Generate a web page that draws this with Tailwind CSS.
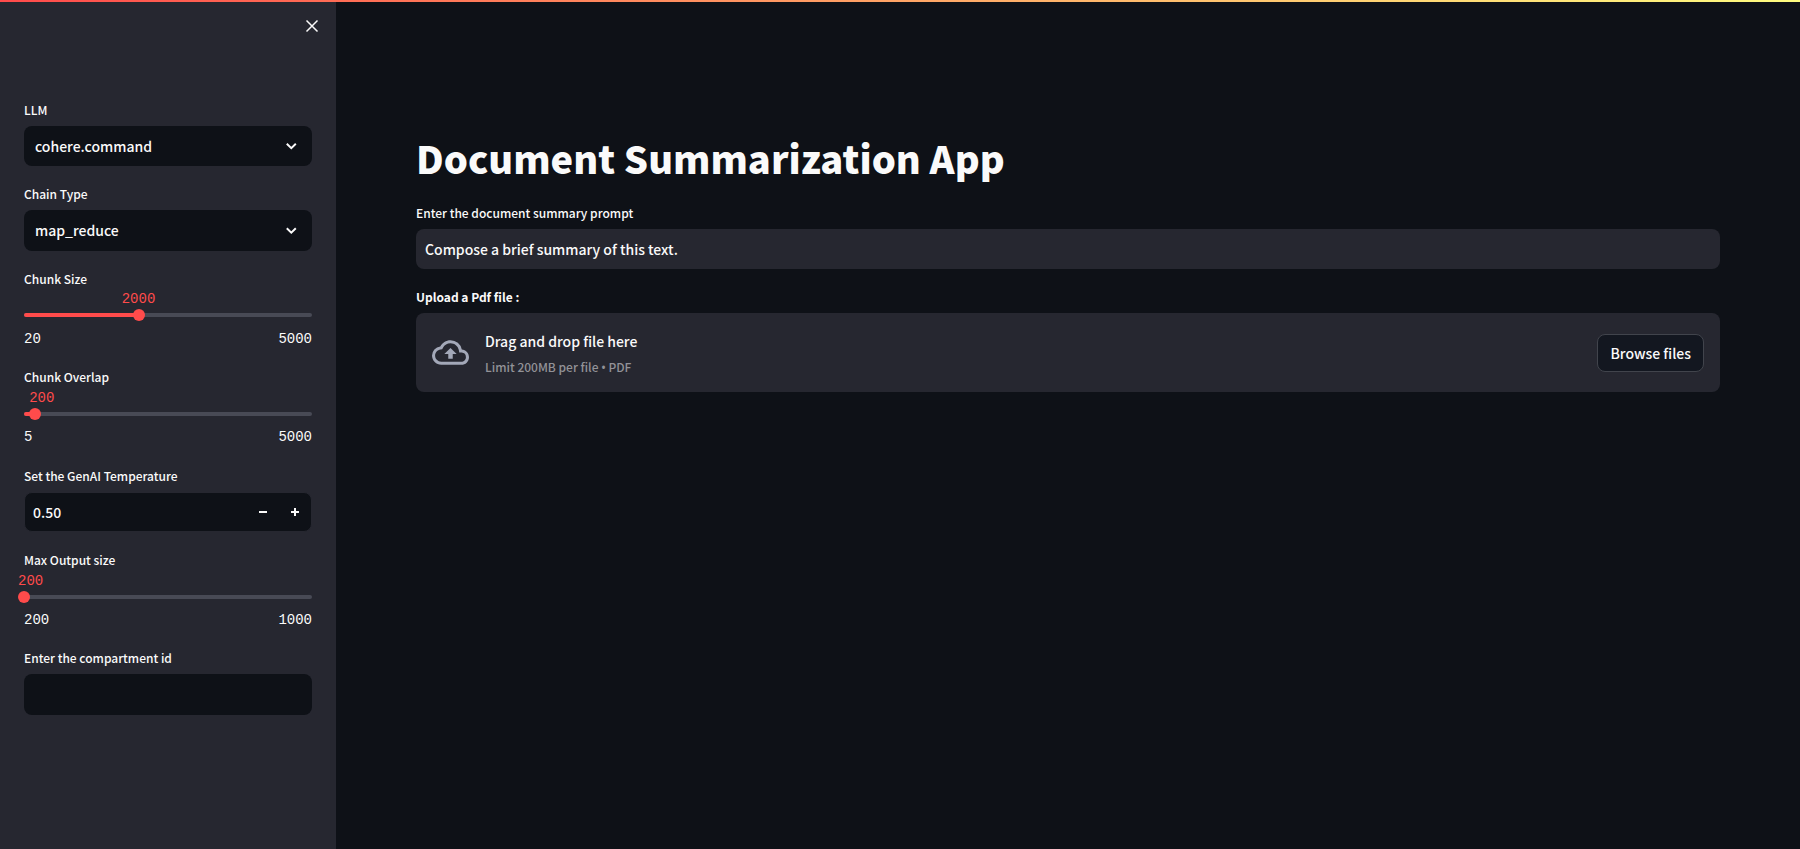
<!DOCTYPE html>
<html lang="en">
<head>
<meta charset="utf-8">
<meta name="viewport" content="width=device-width, initial-scale=1">
<title>Document Summarization App</title>
<script src="https://cdn.jsdelivr.net/npm/@tailwindcss/browser@4"></script>
</head>
<body class="relative flex min-h-screen bg-[#0e1117] font-['Noto_Sans_CJK_SC','Noto_Sans',sans-serif] text-sm font-medium text-[#fafafa]">
  <div class="absolute inset-x-0 top-0 h-0.5 bg-linear-to-r/srgb from-[#ff4b4b] to-[#fffd80]"></div>

  <aside class="w-84 shrink-0 bg-[#262730] px-6">
    <div class="-mr-3 flex h-[98px] justify-end pt-3.5">
      <button type="button" aria-label="Close sidebar" class="flex size-6 items-center justify-center">
        <svg class="size-6" viewBox="0 0 24 24" fill="none" stroke="currentColor" stroke-width="1.5"><path d="M6.5 6.5l11 11M17.5 6.5l-11 11"/></svg>
      </button>
    </div>

    <form class="flex flex-col gap-4">
      <div class="flex flex-col gap-1">
        <label for="llm" class="text-xs leading-6">LLM</label>
        <div class="relative">
          <select id="llm" class="h-10 w-full appearance-none rounded-lg bg-[#0e1117] pr-10 pl-[11px]"><option>cohere.command</option></select>
          <svg class="pointer-events-none absolute top-3 right-3 size-4" viewBox="0 0 16 16" fill="none" stroke="currentColor" stroke-width="2"><path d="M2.8 5.8L7.3 10.2L11.8 5.8"/></svg>
        </div>
      </div>

      <div class="flex flex-col gap-1">
        <label for="chain" class="text-xs leading-6">Chain Type</label>
        <div class="relative">
          <select id="chain" class="h-[41px] w-full appearance-none rounded-lg bg-[#0e1117] pr-10 pb-px pl-[11px]"><option>map_reduce</option></select>
          <svg class="pointer-events-none absolute top-3 right-3 size-4" viewBox="0 0 16 16" fill="none" stroke="currentColor" stroke-width="2"><path d="M2.8 6.3L7.3 10.7L11.8 6.3"/></svg>
        </div>
      </div>

      <div class="flex h-[82px] flex-col">
        <label for="chunk-size" class="text-xs leading-6">Chunk Size</label>
        <div class="relative h-[18px] font-['Liberation_Mono',monospace] leading-4 font-normal text-[#ff4b4b]">
          <output for="chunk-size" class="absolute -translate-x-1/2" style="left:39.76%">2000</output>
        </div>
        <div class="relative flex h-3 items-center">
          <div class="h-1 w-full overflow-hidden rounded-full bg-[#484a55]"><div class="h-1 bg-[#ff4b4b]" style="width:39.76%"></div></div>
          <input id="chunk-size" type="range" min="20" max="5000" value="2000" class="absolute -inset-x-1.5 h-3 appearance-none bg-transparent [&::-webkit-slider-thumb]:size-3 [&::-webkit-slider-thumb]:appearance-none [&::-webkit-slider-thumb]:rounded-full [&::-webkit-slider-thumb]:bg-[#ff4b4b]">
        </div>
        <div class="flex justify-between pt-2 font-['Liberation_Mono',monospace] leading-5 font-normal"><span>20</span><span>5000</span></div>
      </div>

      <div class="flex h-[83px] flex-col">
        <label for="chunk-overlap" class="text-xs leading-6">Chunk Overlap</label>
        <div class="relative h-[19px] font-['Liberation_Mono',monospace] leading-[18px] font-normal text-[#ff4b4b]">
          <output for="chunk-overlap" class="absolute -translate-x-1.5" style="left:3.9%">200</output>
        </div>
        <div class="relative flex h-3 items-center">
          <div class="h-1 w-full overflow-hidden rounded-full bg-[#484a55]"><div class="h-1 bg-[#ff4b4b]" style="width:3.9%"></div></div>
          <input id="chunk-overlap" type="range" min="5" max="5000" value="200" class="absolute -inset-x-1.5 h-3 appearance-none bg-transparent [&::-webkit-slider-thumb]:size-3 [&::-webkit-slider-thumb]:appearance-none [&::-webkit-slider-thumb]:rounded-full [&::-webkit-slider-thumb]:bg-[#ff4b4b]">
        </div>
        <div class="flex justify-between pt-[7px] font-['Liberation_Mono',monospace] leading-5 font-normal"><span>5</span><span>5000</span></div>
      </div>

      <div class="flex flex-col gap-1">
        <label for="temperature" class="text-xs leading-6">Set the GenAI Temperature</label>
        <div class="flex h-10 overflow-hidden rounded-lg border border-[#262730] bg-[#0e1117]">
          <input id="temperature" type="number" min="0" max="1" step="0.01" value="0.50" class="min-w-0 flex-1 appearance-none pl-2 [appearance:textfield]">
          <button type="button" aria-label="Decrease" class="flex w-8 items-center justify-center"><svg class="size-2" viewBox="0 0 8 8" fill="currentColor"><path d="M0 3h8v2H0z"/></svg></button>
          <button type="button" aria-label="Increase" class="flex w-8 items-center justify-center"><svg class="size-2" viewBox="0 0 8 8" fill="currentColor"><path d="M0 3h3V0h2v3h3v2H5v3H3V5H0z"/></svg></button>
        </div>
      </div>

      <div class="flex h-[82px] flex-col">
        <label for="max-output" class="text-xs leading-6">Max Output size</label>
        <div class="relative h-[19px] font-['Liberation_Mono',monospace] leading-[18px] font-normal text-[#ff4b4b]">
          <output for="max-output" class="absolute -translate-x-1.5" style="left:0%">200</output>
        </div>
        <div class="relative flex h-3 items-center">
          <div class="h-1 w-full overflow-hidden rounded-full bg-[#484a55]"><div class="h-1 bg-[#ff4b4b]" style="width:0%"></div></div>
          <input id="max-output" type="range" min="200" max="1000" value="200" class="absolute -inset-x-1.5 h-3 appearance-none bg-transparent [&::-webkit-slider-thumb]:size-3 [&::-webkit-slider-thumb]:appearance-none [&::-webkit-slider-thumb]:rounded-full [&::-webkit-slider-thumb]:bg-[#ff4b4b]">
        </div>
        <div class="flex justify-between pt-[7px] font-['Liberation_Mono',monospace] leading-5 font-normal"><span>200</span><span>1000</span></div>
      </div>

      <div class="flex flex-col gap-1">
        <label for="compartment" class="text-xs leading-6">Enter the compartment id</label>
        <input id="compartment" type="text" class="h-[41px] w-full rounded-lg bg-[#0e1117] px-2.5">
      </div>
    </form>
  </aside>

  <main class="min-w-0 flex-1 px-20 pt-[130px]">
    <h1 class="text-[38px] leading-[55px] font-black">Document Summarization App</h1>
    <div class="mt-4 flex flex-col gap-1">
      <label for="prompt" class="text-xs leading-6">Enter the document summary prompt</label>
      <input id="prompt" type="text" value="Compose a brief summary of this text." class="h-10 w-full rounded-lg bg-[#262730] px-[9px]">
    </div>
    <div class="mt-4 flex flex-col gap-1">
      <label for="pdf" class="text-xs leading-6 font-bold">Upload a Pdf file :</label>
      <section class="flex items-center rounded-lg bg-[#262730] p-4">
        <svg class="mr-4 size-[37px]" viewBox="0 0 24 24" fill="#a3a8b8"><path d="M19.35 10.04A7.49 7.49 0 0012 4C9.11 4 6.6 5.64 5.35 8.04A5.994 5.994 0 000 14c0 3.31 2.69 6 6 6h13c2.76 0 5-2.24 5-5 0-2.64-2.05-4.78-4.65-4.96zM19 18H6c-2.21 0-4-1.79-4-4 0-2.05 1.53-3.76 3.56-3.97l1.07-.11.5-.95A5.469 5.469 0 0112 6c2.62 0 4.88 1.86 5.39 4.43l.3 1.5 1.53.11A2.98 2.98 0 0122 15c0 1.65-1.35 3-3 3zM8 13h2.55v3h2.9v-3H16l-4-4z"/></svg>
        <div class="-mb-1 flex flex-1 flex-col">
          <span class="leading-6">Drag and drop file here</span>
          <span class="text-xs leading-[27px] text-[#929297]">Limit 200MB per file <span class="font-['Noto_Sans'] leading-none">•</span> PDF</span>
        </div>
        <input id="pdf" type="file" accept="application/pdf" class="hidden">
        <button type="button" class="h-[38px] rounded-lg border border-[#41444c] bg-[#131720] px-3">Browse files</button>
      </section>
    </div>
  </main>
</body>
</html>
